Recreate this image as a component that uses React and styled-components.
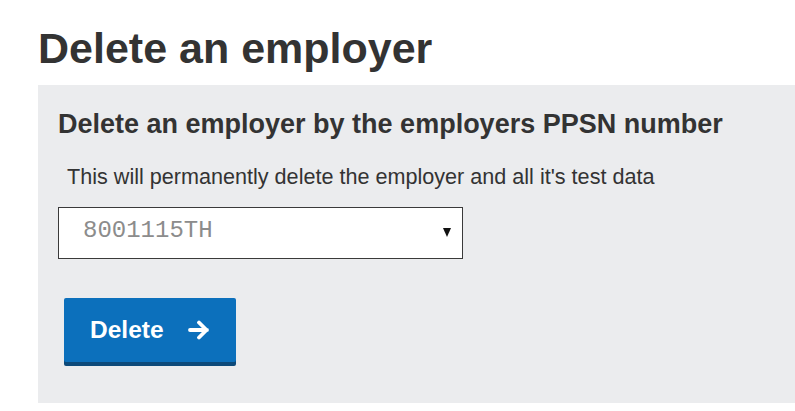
import React from 'react';
import styled, { createGlobalStyle } from 'styled-components';

const GlobalStyle = createGlobalStyle`
  html, body {
    margin: 0;
    padding: 0;
    background: #ffffff;
    font-family: "Liberation Sans", Arial, sans-serif;
    color: #333333;
  }
`;

const Page = styled.div`
  padding: 27px 0 0 38px;
`;

const Title = styled.h1`
  margin: 0 0 15px;
  font-size: 43px;
  line-height: 43px;
  font-weight: 700;
  color: #333333;
`;

const Panel = styled.section`
  background: #ebecee;
  padding: 26px 20px 37px 20px;
  display: flex;
  flex-direction: column;
  align-items: flex-start;
`;

const Subtitle = styled.h2`
  margin: 0 0 28px;
  font-size: 27px;
  line-height: 27px;
  font-weight: 700;
  color: #333333;
`;

const Hint = styled.p`
  margin: 0 0 19px 9px;
  font-size: 21.6px;
  line-height: 21.5px;
  color: #333333;
`;

const SelectWrap = styled.div`
  position: relative;
  width: 405px;
  margin-bottom: 39px;
`;

const Select = styled.select`
  appearance: none;
  -webkit-appearance: none;
  box-sizing: border-box;
  width: 100%;
  height: 52px;
  margin: 0;
  padding: 10px 40px 14px 24px;
  border: 1px solid #3a3a3a;
  border-radius: 0;
  background: #ffffff;
  font-family: "Liberation Mono", "Courier New", monospace;
  font-size: 24px;
  line-height: 26px;
  color: #8c8c8c;
  outline: none;
`;

const Caret = styled.span`
  position: absolute;
  right: 12px;
  top: 21px;
  width: 0;
  height: 0;
  border-left: 4.5px solid transparent;
  border-right: 4.5px solid transparent;
  border-top: 9px solid #111111;
  pointer-events: none;
`;

const Button = styled.button`
  display: flex;
  align-items: center;
  gap: 24px;
  box-sizing: border-box;
  height: 64px;
  margin: 0 0 4px 6px;
  padding: 0 26px 0 26px;
  border: none;
  border-radius: 2px;
  background: #0c70bc;
  box-shadow: 0 4px 0 #0d4a7a;
  color: #ffffff;
  font-family: "Liberation Sans", Arial, sans-serif;
  font-size: 24.5px;
  font-weight: 700;
  cursor: pointer;
`;

const Arrow = () => (
  <svg width="22" height="20" viewBox="0 0 22 20" fill="none">
    <path
      d="M2 10 H19 M11 2.5 L18.5 10 L11 17.5"
      stroke="#ffffff"
      strokeWidth="3.8"
      strokeLinecap="round"
      strokeLinejoin="round"
    />
  </svg>
);

export default function App() {
  return (
    <Page>
      <GlobalStyle />
      <Title>Delete an employer</Title>
      <Panel>
        <Subtitle>Delete an employer by the employers PPSN number</Subtitle>
        <Hint>This will permanently delete the employer and all it's test data</Hint>
        <SelectWrap>
          <Select defaultValue="8001115TH">
            <option value="8001115TH">8001115TH</option>
          </Select>
          <Caret />
        </SelectWrap>
        <Button type="button">
          Delete
          <Arrow />
        </Button>
      </Panel>
    </Page>
  );
}
